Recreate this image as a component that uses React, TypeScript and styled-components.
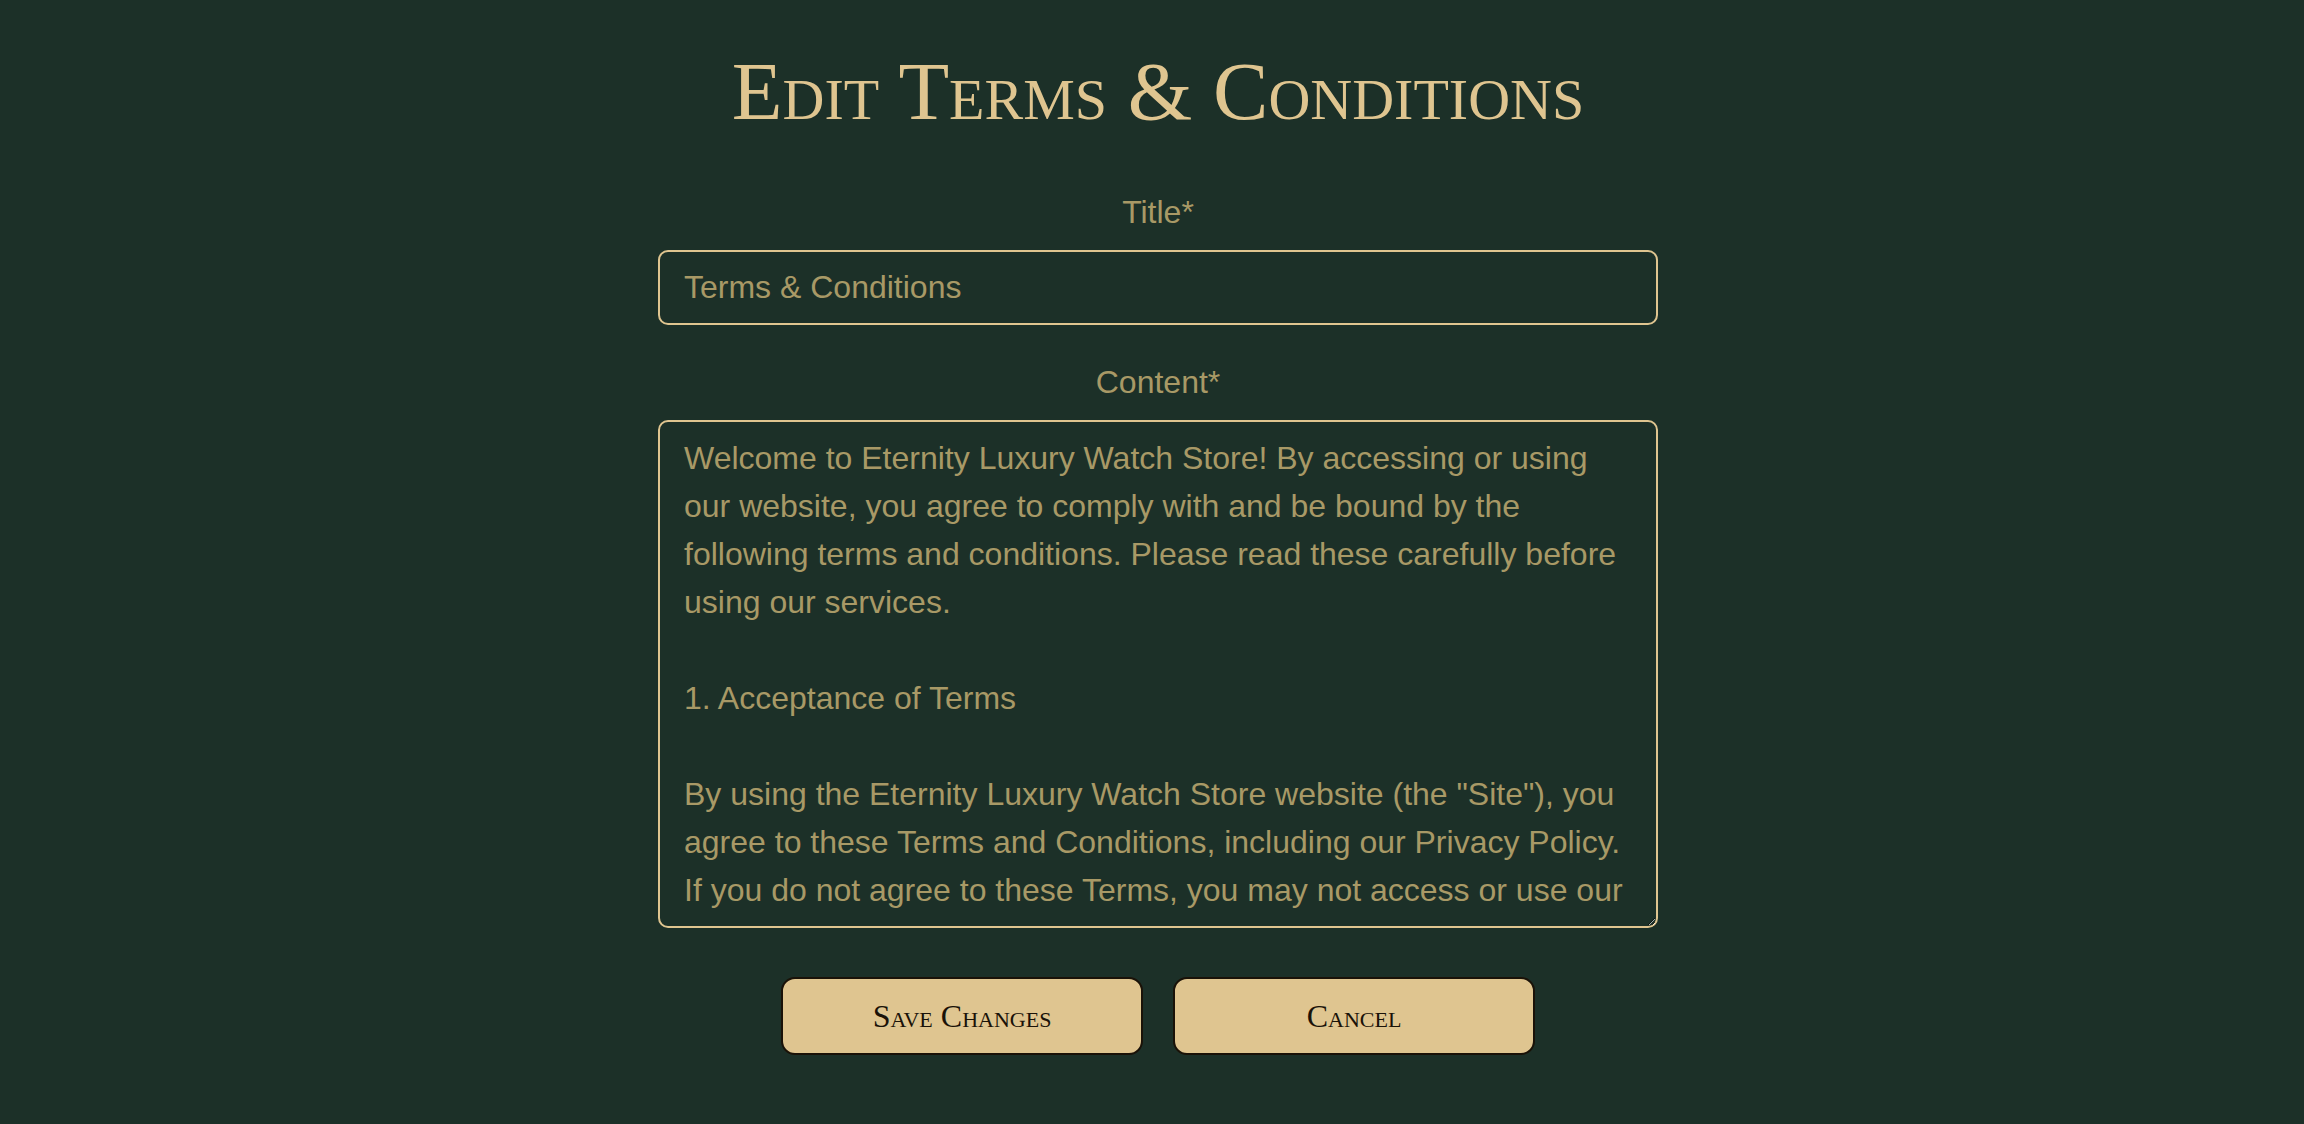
import styled, { createGlobalStyle } from 'styled-components';

const GlobalStyle = createGlobalStyle`
  html, body {
    margin: 0;
    padding: 0;
    background: #1c3028;
  }
  body {
    font-family: "Liberation Sans", Arial, sans-serif;
  }
`;

const Page = styled.main`
  min-height: 1124px;
  background: #1c3028;
  display: flex;
  flex-direction: column;
  align-items: center;
  padding: 36px 0 0 12px;
  box-sizing: border-box;
`;

const Heading = styled.h1`
  margin: 0 0 46px 0;
  font-family: "Liberation Serif", "Times New Roman", serif;
  font-variant: small-caps;
  font-weight: 400;
  font-size: 83px;
  line-height: 110px;
  color: #dfc590;
`;

const Form = styled.form`
  width: 1000px;
  display: flex;
  flex-direction: column;
  align-items: stretch;
`;

const Label = styled.label`
  display: block;
  text-align: center;
  font-size: 32px;
  line-height: 40px;
  color: #a89966;
  margin-bottom: 18px;
`;

const fieldBase = `
  box-sizing: border-box;
  width: 100%;
  background: transparent;
  border: 2px solid #dfc590;
  border-radius: 10px;
  color: #a89966;
  font-family: "Liberation Sans", Arial, sans-serif;
  font-size: 32px;
  outline: none;
`;

const TextInput = styled.input`
  ${fieldBase}
  height: 75px;
  padding: 0 24px;
  margin-bottom: 37px;
`;

const TextArea = styled.textarea`
  ${fieldBase}
  height: 508px;
  padding: 12px 22px 0 24px;
  line-height: 48px;
  resize: vertical;
  overflow: hidden;
`;

const Actions = styled.div`
  display: flex;
  justify-content: center;
  gap: 30px;
  margin-top: 49px;
`;

const ActionButton = styled.button`
  width: 362px;
  height: 78px;
  background: #dfc590;
  border: 2px solid #1a1208;
  border-radius: 14px;
  font-family: "Liberation Serif", "Times New Roman", serif;
  font-variant: small-caps;
  font-size: 32px;
  color: #1a1208;
  cursor: pointer;
`;

const content = `Welcome to Eternity Luxury Watch Store! By accessing or using our website, you agree to comply with and be bound by the following terms and conditions. Please read these carefully before using our services.

1. Acceptance of Terms

By using the Eternity Luxury Watch Store website (the "Site"), you agree to these Terms and Conditions, including our Privacy Policy. If you do not agree to these Terms, you may not access or use our Site or services.`;

export default function App() {
  return (
    <>
      <GlobalStyle />
      <Page>
        <Heading>Edit Terms &amp; Conditions</Heading>
        <Form onSubmit={(e) => e.preventDefault()}>
          <Label htmlFor="title">Title*</Label>
          <TextInput id="title" defaultValue="Terms & Conditions" />
          <Label htmlFor="content">Content*</Label>
          <TextArea id="content" defaultValue={content} />
          <Actions>
            <ActionButton type="submit">Save Changes</ActionButton>
            <ActionButton type="button">Cancel</ActionButton>
          </Actions>
        </Form>
      </Page>
    </>
  );
}
